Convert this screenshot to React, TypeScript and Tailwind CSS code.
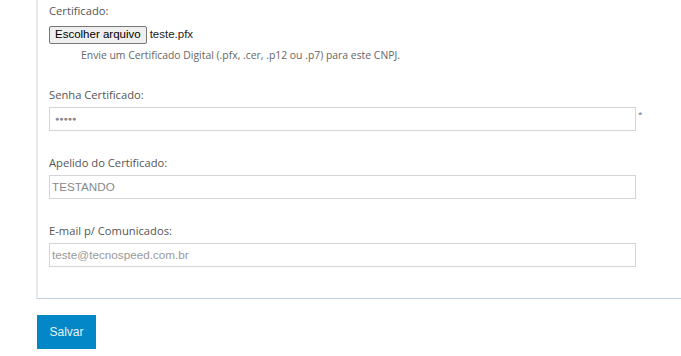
const Field = ({ label, value, muted }: { label: string; value: string; muted?: boolean }) => (
  <div>
    <label className="block text-[11.2px] leading-[17px] text-[#555] mb-[4px]">{label}</label>
    <div className="w-[587px] h-[24px] border border-[#d5d5d5] bg-white pl-[2px] flex items-center">
      <span className={`font-['Liberation_Sans',Arial,sans-serif] text-[11.7px] ${muted ? 'text-[#999]' : 'text-[#888]'}`}>{value}</span>
    </div>
  </div>
);

const App = () => {
  return (
    <div className="w-[681px] h-[356px] bg-white overflow-hidden font-['Open_Sans',sans-serif]">
      <div className="ml-[36px] border-l-2 border-l-[#e8e8e8] border-b border-b-[#c5d3e0] pl-[11px] pt-[2px] h-[299px]">
        <label className="block text-[11.2px] leading-[17px] text-[#555]">Certificado:</label>
        <div className="mt-[7px] flex items-center gap-[3px] font-['Liberation_Sans',Arial,sans-serif] text-[11.5px] text-[#222]">
          <button className="h-[18px] px-[5px] bg-[#efefef] border border-[#767676] rounded-[2px] text-[11.5px] leading-none text-black">
            Escolher arquivo
          </button>
          <span>teste.pfx</span>
        </div>
        <p className="ml-[32px] mt-[4px] text-[10.4px] leading-[14px] text-[#666]">
          Envie um Certificado Digital (.pfx, .cer, .p12 ou .p7) para este CNPJ.
        </p>

        <div className="mt-[24px] flex items-start">
          <div>
            <label className="block text-[11.2px] leading-[17px] text-[#555] mb-[4px]">Senha Certificado:</label>
            <div className="w-[587px] h-[24px] border border-[#d5d5d5] bg-white pl-[5px] flex items-center">
              <span className="text-[7px] text-[#888]">●●●●●</span>
            </div>
          </div>
          <span className="ml-[2px] mt-[22px] text-[8px] text-[#666]">*</span>
        </div>

        <div className="mt-[23px]">
          <Field label="Apelido do Certificado:" value="TESTANDO" />
        </div>
        <div className="mt-[23px]">
          <Field label="E-mail p/ Comunicados:" value="teste@tecnospeed.com.br" muted />
        </div>
      </div>
      <button className="ml-[37px] mt-[16px] w-[59px] h-[34px] bg-[#0487c6] text-[#e8f2f8] font-['Liberation_Sans',Arial,sans-serif] text-[12px]">
        Salvar
      </button>
    </div>
  );
};

export default App;
